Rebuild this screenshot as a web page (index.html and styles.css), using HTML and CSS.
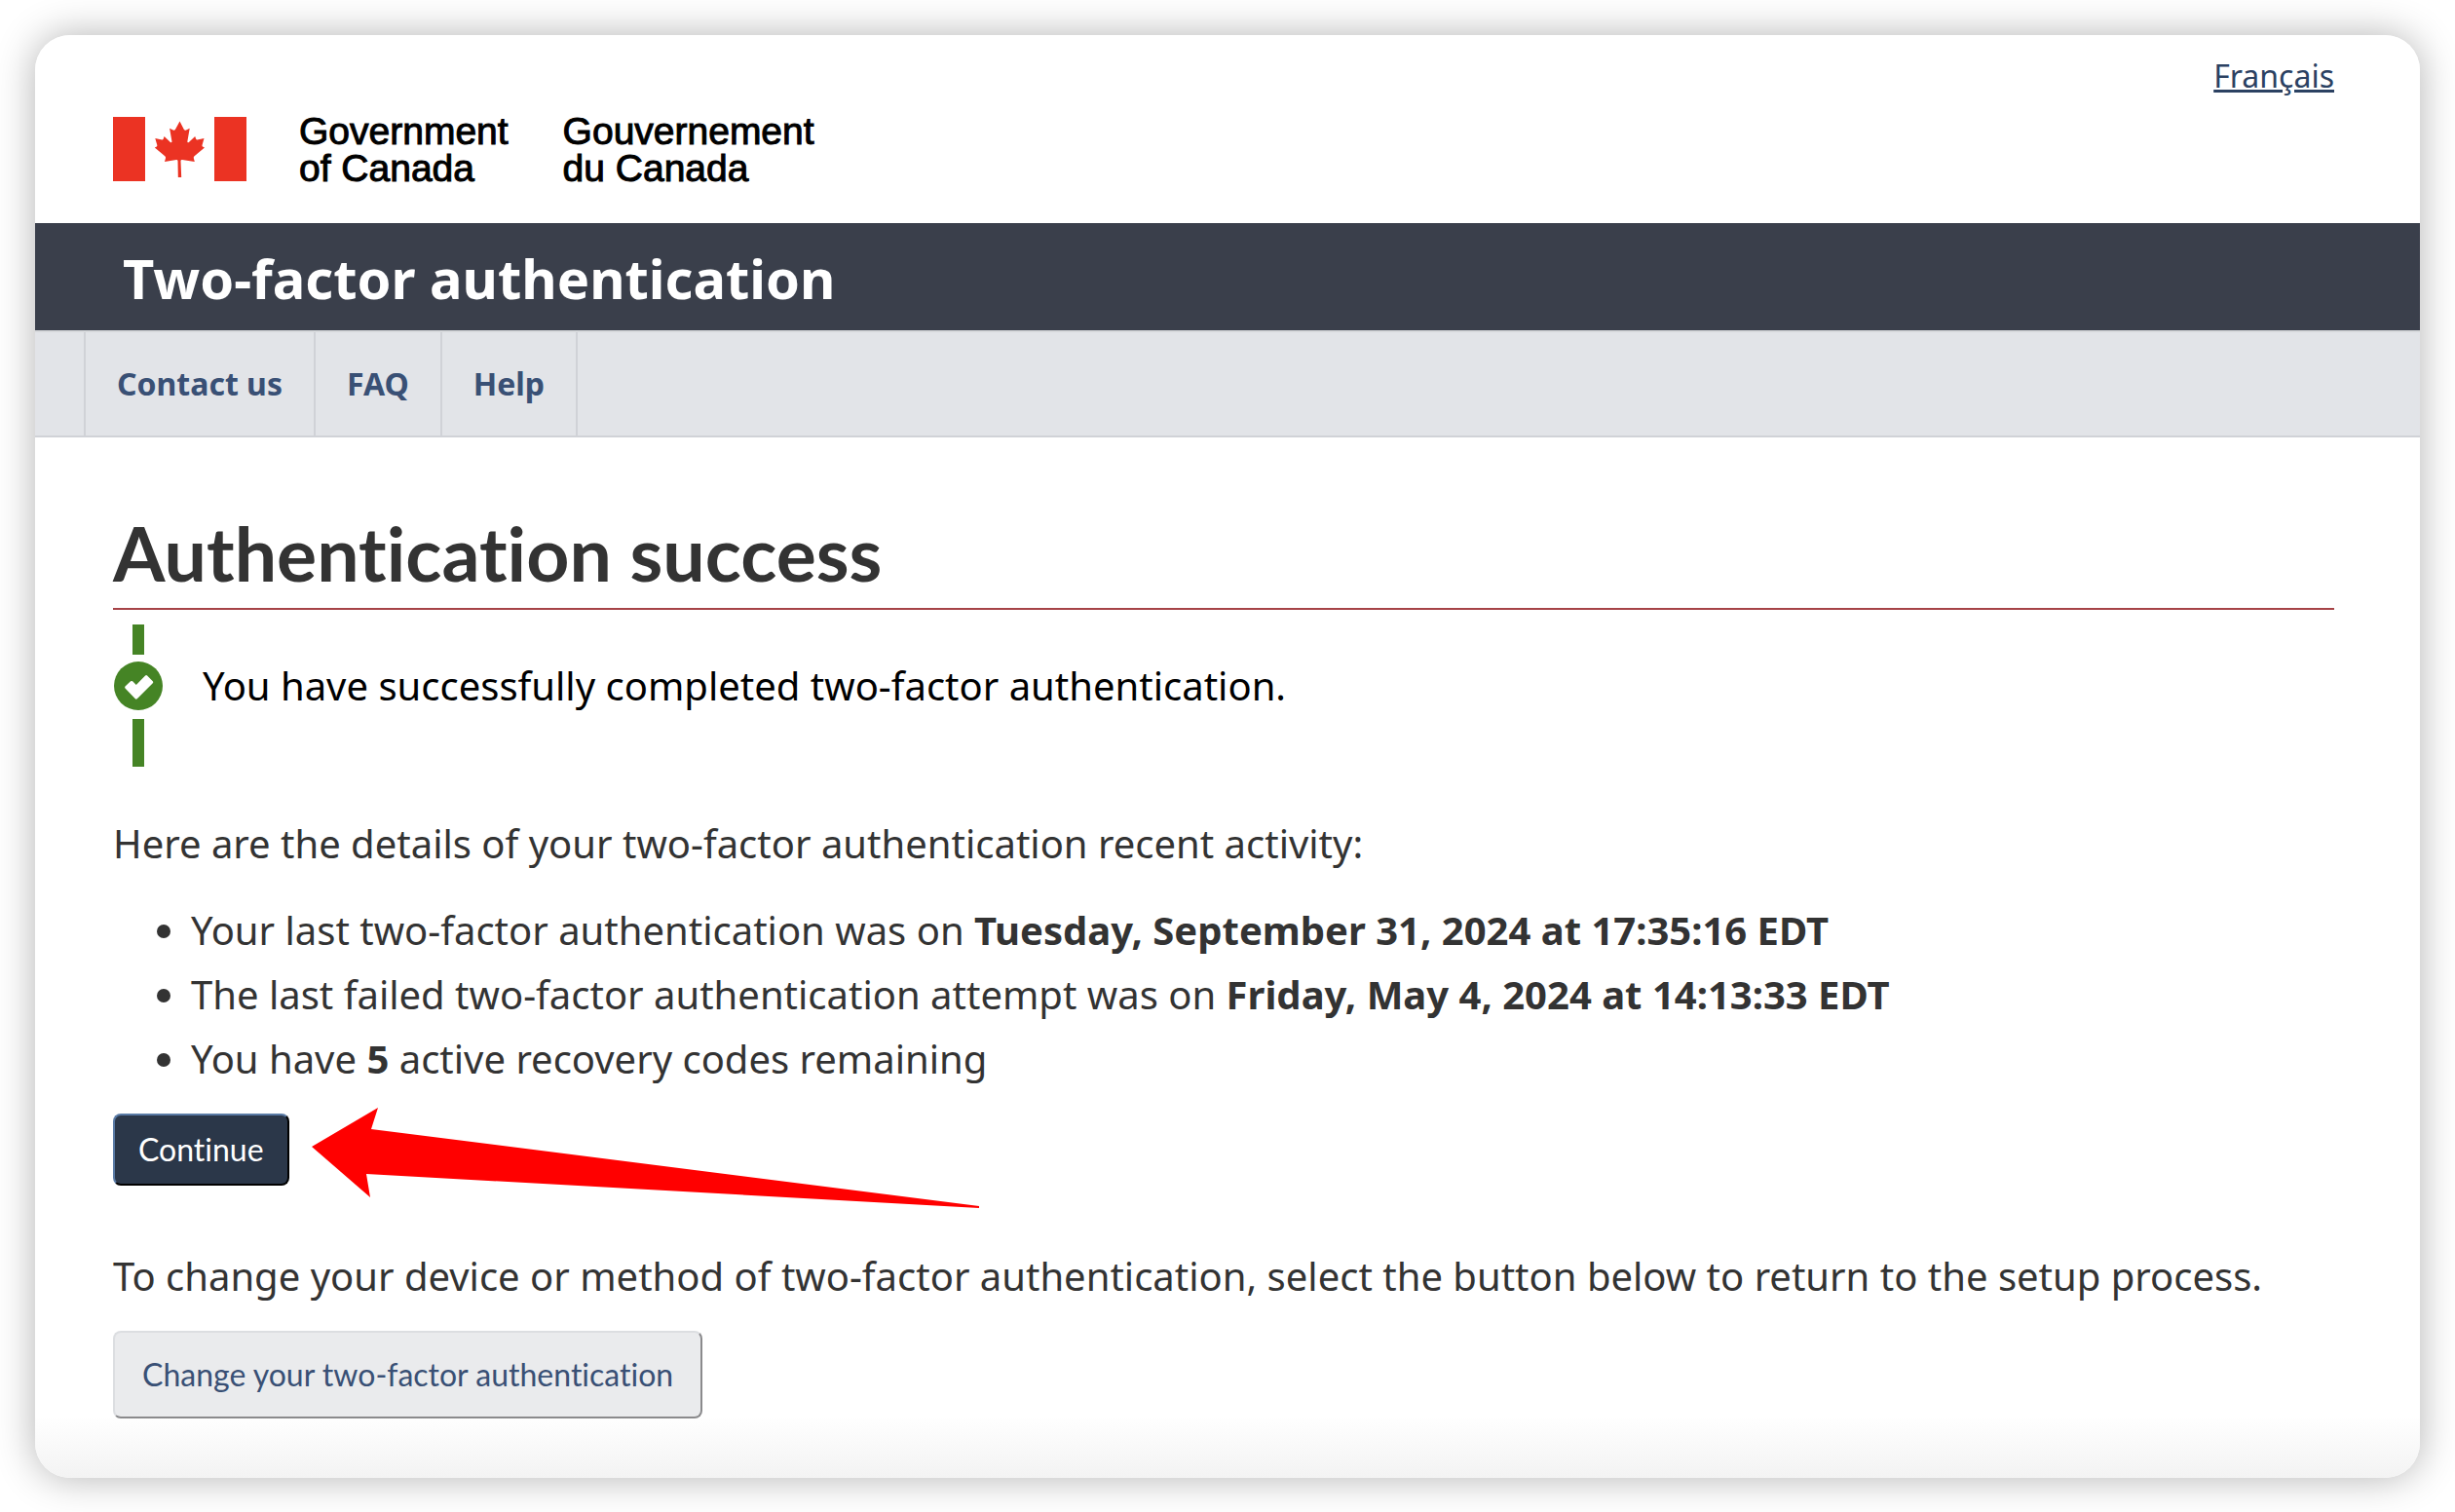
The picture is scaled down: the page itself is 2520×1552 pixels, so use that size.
FILE: index.html
```html
<!DOCTYPE html>
<html lang="en">
<head>
<meta charset="utf-8">
<meta name="viewport" content="width=device-width, initial-scale=1">
<title>Two-factor authentication</title>
<link rel="stylesheet" href="styles.css">
</head>
<body>
<div class="sheet">
  <header class="brand-bar">
    <a class="language" href="#" lang="fr">Français</a>
    <div class="brand">
      <svg class="flag" viewBox="0 0 137 66" aria-hidden="true">
        <path fill="#eb3323" d="M0 0h33v66H0zM104 0h33v66h-33z"/>
        <path fill="#eb3323" d="M68.500 4.500l-4.600 8.500q-1 1-2.200.400l-3.600-1.700 2.300 13.300q.3 2-1.500 1l-6.300-6-1 2.800q-.4.700-1.300.600l-7-1.500 2 7q.2 1-.5 1.500l-2 1.100 10.500 8.800q1 1 .7 2l-1 3.600 12-2q1.500-.1 1.500 1.300L66.800 62h3.400l-.7-16.800q0-1.400 1.500-1.300l12.800 2-1-3.600q-.3-1 .7-2L94 31.500l-2-1.100q-.7-.5-.5-1.500l2-7-7 1.500q-.9.100-1.300-.6l-1-2.800-6.300 6q-1.800 1-1.500-1l2.300-13.300-3.600 1.700q-1.200.6-2.200-.4z"/>
      </svg>
      <span class="brand-name">Government<br>of Canada</span>
      <span class="brand-name" lang="fr">Gouvernement<br>du Canada</span>
    </div>
  </header>
  <div class="title-bar">Two-factor authentication</div>
  <nav class="menu">
    <a href="#">Contact us</a>
    <a href="#">FAQ</a>
    <a href="#">Help</a>
  </nav>
  <main class="content">
    <h1>Authentication success</h1>
    <div class="success">
      <svg class="success-mark" viewBox="0 0 52 146" aria-hidden="true">
        <path fill="#458425" d="M20 0h12v31H20zM20 97h12v49H20z"/>
        <circle cx="26" cy="63" r="25" fill="#458425"/>
        <path fill="#fff" d="M12.500 65.500q-.8-1 0-2l5.600-5.200q1-.7 2 0l3.700 3.700 9.300-9.400q1-1 2 0l5.700 5.600q1 1 0 2L25 76q-1.200 1.300-2.400 0z"/>
      </svg>
      <p>You have successfully completed two-factor authentication.</p>
    </div>
    <p>Here are the details of your two-factor authentication recent activity:</p>
    <ul>
      <li>Your last two-factor authentication was on <strong>Tuesday, September 31, 2024 at 17:35:16 EDT</strong></li>
      <li>The last failed two-factor authentication attempt was on <strong>Friday, May 4, 2024 at 14:13:33 EDT</strong></li>
      <li>You have <strong>5</strong> active recovery codes remaining</li>
    </ul>
    <div class="continue-row">
      <button class="button primary" type="button">Continue</button>
      <svg class="pointer" viewBox="0 0 686 104" aria-hidden="true">
        <path fill="#f00" d="M0 40L68 0l-7 22 624 79v2L56 68l4 24z"/>
      </svg>
    </div>
    <p>To change your device or method of two-factor authentication, select the button below to return to the setup process.</p>
    <button class="button secondary" type="button">Change your two-factor authentication</button>
  </main>
</div>
</body>
</html>
```
FILE: styles.css
```css
* {
  box-sizing: border-box;
}

body {
  margin: 0;
  padding: 36px;
  background: #fff;
  color: #333;
  font: 40px/66px "Noto Sans", sans-serif;
}

.sheet {
  overflow: hidden;
  border-radius: 36px;
  background: linear-gradient(to top, #f3f3f3, #fff 64px);
  box-shadow: 0 0 40px rgba(0, 0, 0, 0.3);
}

.brand-bar {
  display: flex;
  flex-direction: column;
  padding: 20px 88px 37px 80px;
}

.language {
  align-self: flex-end;
  color: #2b4162;
  font-size: 32px;
  line-height: 44px;
}

.brand {
  display: flex;
  align-items: center;
  margin-top: 14px;
}

.flag {
  width: 137px;
  height: 66px;
  margin-right: 54px;
}

.brand-name {
  margin-right: 56px;
  padding-top: 2px;
  color: #000;
  font: 39px/38px "Liberation Sans", Arial, sans-serif;
  -webkit-text-stroke: 1px #000;
}

.title-bar {
  padding: 18px 90px 16px;
  background: #3a3f4b;
  color: #fff;
  font-size: 56px;
  font-weight: 700;
  line-height: 76px;
}

.menu {
  display: flex;
  padding-left: 50px;
  border-top: 2px solid #d5d7da;
  border-bottom: 2px solid #d0d2d7;
  background: #e2e4e8;
}

.menu a {
  padding: 32px;
  border-right: 2px solid #d0d2d7;
  color: #395075;
  font-size: 32px;
  font-weight: 700;
  line-height: 42px;
  text-decoration: none;
}

.menu a:first-child {
  border-left: 2px solid #d0d2d7;
}

.content {
  padding: 72px 88px 61px 80px;
}

h1 {
  margin: 0 0 15px;
  padding-bottom: 11px;
  border-bottom: 2px solid #a64347;
  font: 700 77px/92px Lato, sans-serif;
  font-variant-ligatures: none;
}

p {
  margin: 0 0 23px;
}

.success {
  display: flex;
  gap: 40px;
  margin-bottom: 46px;
  color: #000;
}

.success p {
  margin: 30px 0 0;
}

.success-mark {
  width: 52px;
  height: 146px;
}

ul {
  margin: 0 0 23px;
  padding-left: 80px;
}

.continue-row {
  position: relative;
  margin-bottom: 60px;
}

.button {
  display: block;
  border: 2px solid;
  border-radius: 8px;
  font-family: Lato, sans-serif;
  font-size: 32px;
  font-variant-ligatures: none;
  line-height: 46px;
}

.primary {
  padding: 12px 24px;
  border-color: #5a7ba6 #000 #000 #5a7ba6;
  background: #2b3749;
  color: #fff;
}

.secondary {
  padding: 20px 28px;
  border-color: #dcdee1 #8a8a8c #8a8a8c #dcdee1;
  background: #eaebed;
  color: #395075;
}

/* Arrow laid over the page, pointing at the Continue button */
.pointer {
  position: absolute;
  top: -6px;
  left: 204px;
  width: 686px;
  height: 104px;
}
```
